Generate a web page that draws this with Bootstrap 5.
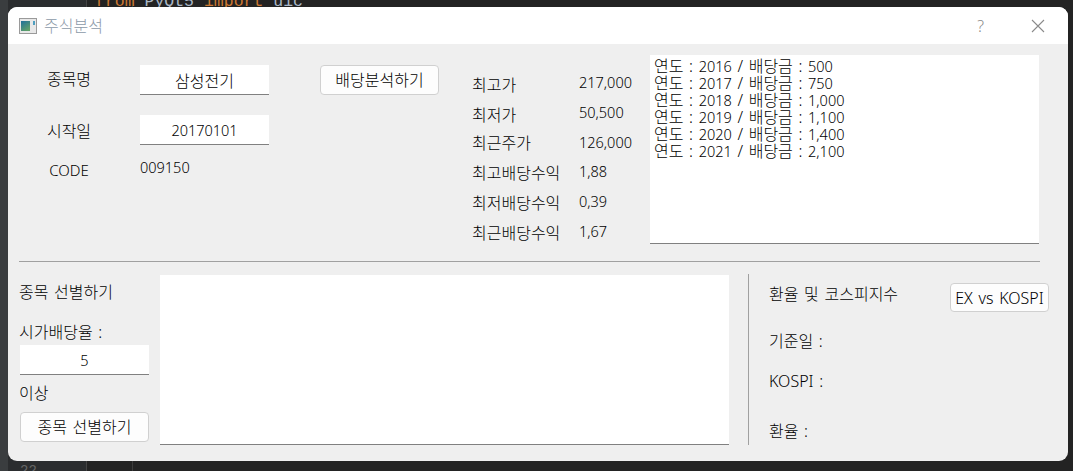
<!DOCTYPE html>
<html lang="ko">
<head>
    <meta charset="UTF-8">
    <title>주식분석</title>
    <link rel="stylesheet" href="https://cdn.jsdelivr.net/npm/bootstrap@5.3.0/dist/css/bootstrap.min.css">
    <style>
        html, body { height: 100%; overflow: hidden; }
        body {
            background: #232323;
            color: #000;
            font-family: "Noto Sans", "Noto Sans CJK KR", sans-serif;
            font-size: 16px;
            font-weight: 300;
            line-height: 20px;
            word-spacing: 1.5px;
        }
        .num { font-size: 14.5px; }
        .desk { height: 471px; padding: 7px 5px 10px 8px; position: relative; }
        .side-strip { position: absolute; left: 0; top: 0; bottom: 0; width: 87px; background: #2b2d2f; border-right: 1px solid #444; }
        .side-edge { position: absolute; left: 0; top: 0; bottom: 0; width: 8px; background: #3a3d3f; }
        .gutter-line { position: absolute; left: 132px; top: 0; bottom: 0; width: 1px; background: #3c3c3c; }
        .code-line { position: absolute; left: 95px; top: -8px; font: 16.5px/20px "Liberation Mono", monospace; color: #a9b7c6; white-space: pre; word-spacing: 0; }
        .code-line b { font-weight: 400; color: #cc7832; }
        .line-no { position: absolute; left: 20px; top: 463px; font: 14px/16px "Liberation Mono", monospace; color: #666; }
        .app-win { position: relative; height: 454px; background: #efefef; border-radius: 9px; overflow: hidden; }
        .title-bar { height: 37px; background: #fff; padding: 0 23px 0 11px; }
        .title-text { color: #8c9aa8; margin-left: 7px; }
        .help-mark { color: #8a8a8a; font-size: 16px; margin-right: 47px; }
        .top-part { height: 217px; padding-left: 11px; }
        .label-cell { width: 100px; margin-right: 21px; }
        .field-box {
            display: block;
            width: 129px; height: 30px;
            background: #fff;
            border: 0; border-bottom: 1px solid #808080; border-radius: 0;
            padding: 0; text-align: center;
            font-size: 16px; font-weight: 300; color: #000;
        }
        .field-box.num { font-size: 14.5px; }
        .field-row + .field-row { margin-top: 20px; }
        .push-box { margin-top: 21px; }
        .code-row { margin-top: 11px; height: 24px; }
        .code-name { margin-top: 4px; font-size: 15px; }
        .code-val { margin-top: -3px; }
        .label-low { padding-top: 2px; }
        .label-high { padding-bottom: 2px; }
        .qt-btn {
            background: #fdfdfd; color: #000;
            border: 1px solid #d0d0d0; border-radius: 4px;
            padding: 0; font-size: 16px; font-weight: 300; line-height: 20px; word-spacing: 1.5px;
        }
        .qt-btn:hover { background: #fdfdfd; border-color: #d0d0d0; color: #000; }
        .analyze-btn { width: 119px; height: 30px; margin: 21px 33px 0 51px; }
        .stats { width: 178px; padding-top: 24px; }
        .stat-row { height: 30px; line-height: 30px; }
        .stat-name { width: 107px; }
        .up-1 { margin-top: -1px; }
        .up-2 { margin-top: -2px; }
        .down-2 { margin-top: 2px; }
        .result-box {
            width: 389px; height: 189px; margin-top: 11px;
            background: #fff; border-bottom: 1px solid #808080;
            padding: 3px 4px; line-height: 17px; white-space: nowrap;
        }
        .split-line { width: 1021px; height: 1px; margin-left: 11px; background: #a0a0a0; }
        .bottom-part { padding-left: 12px; }
        .pick-col { width: 129px; }
        .pick-col .field-box { margin-top: 3px; }
        .pick-title { margin: 20px 0 0 -1px; }
        .pick-rate { margin: 20px 0 0 -1px; }
        .pick-more { margin: 8px 0 0 -1px; }
        .pick-btn { width: 129px; height: 30px; margin-top: 9px; }
        .pick-list { width: 569px; height: 170px; margin: 13px 0 0 11px; background: #fff; border-bottom: 1px solid #808080; }
        .v-line { width: 1px; height: 171px; margin: 12px 20px 0 19px; background: #a0a0a0; }
        .fx-col { width: 280px; }
        .fx-head { margin-top: 21px; height: 29px; }
        .fx-head span { margin-top: -7px; }
        .fx-btn { width: 99px; height: 29px; }
        .fx-date { margin-top: 19px; }
        .fx-kospi { margin-top: 20px; }
        .fx-rate { margin-top: 30px; }
    </style>
</head>
<body>

<div class="desk">
    <div class="side-strip"></div>
    <div class="side-edge"></div>
    <div class="gutter-line"></div>
    <div class="code-line"><b>from</b> PyQt5 <b>import</b> uic</div>
    <div class="line-no">22</div>

    <div class="app-win">
        <div class="title-bar d-flex align-items-center">
            <svg width="18" height="16" viewBox="0 0 18 16">
                <defs>
                    <linearGradient id="iconFill" x1="0" y1="0" x2="0.6" y2="1">
                        <stop offset="0" stop-color="#1f6f9c"/>
                        <stop offset="1" stop-color="#5fa06a"/>
                    </linearGradient>
                </defs>
                <rect x="0.5" y="0.5" width="17" height="15" fill="#e8e8e8" stroke="#9a9a9a"/>
                <rect x="2" y="3" width="9" height="10" fill="url(#iconFill)"/>
                <rect x="14" y="3" width="2" height="4" fill="#4f9fc0"/>
            </svg>
            <span class="title-text">주식분석</span>
            <span class="help-mark ms-auto">?</span>
            <svg width="14" height="14" viewBox="0 0 14 14">
                <path d="M1 1 L13 13 M13 1 L1 13" stroke="#8a8a8a" stroke-width="1.1" fill="none"/>
            </svg>
        </div>

        <div class="top-part d-flex">
            <div class="push-box">
                <div class="field-row d-flex align-items-center">
                    <div class="label-cell text-center label-high">종목명</div>
                    <input class="field-box" value="삼성전기" readonly>
                </div>
                <div class="field-row d-flex align-items-center">
                    <div class="label-cell text-center label-low">시작일</div>
                    <input class="field-box num" value="20170101" readonly>
                </div>
                <div class="code-row d-flex align-items-center">
                    <div class="label-cell text-center code-name">CODE</div>
                    <div class="code-val num">009150</div>
                </div>
            </div>
            <button class="btn qt-btn analyze-btn flex-shrink-0">배당분석하기</button>
            <div class="stats flex-shrink-0">
                <div class="stat-row d-flex"><div class="stat-name down-2">최고가</div><div class="num up-1">217,000</div></div>
                <div class="stat-row d-flex"><div class="stat-name down-2">최저가</div><div class="num up-1">50,500</div></div>
                <div class="stat-row d-flex"><div class="stat-name">최근주가</div><div class="num up-1">126,000</div></div>
                <div class="stat-row d-flex"><div class="stat-name">최고배당수익</div><div class="num up-2">1,88</div></div>
                <div class="stat-row d-flex"><div class="stat-name">최저배당수익</div><div class="num up-2">0,39</div></div>
                <div class="stat-row d-flex"><div class="stat-name">최근배당수익</div><div class="num up-2">1,67</div></div>
            </div>
            <div class="result-box flex-shrink-0" id="resultBox"></div>
        </div>

        <div class="split-line"></div>

        <div class="bottom-part d-flex">
            <div class="pick-col flex-shrink-0">
                <div class="pick-title">종목 선별하기</div>
                <div class="pick-rate">시가배당율 :</div>
                <input class="field-box num" value="5" readonly>
                <div class="pick-more">이상</div>
                <button class="btn qt-btn pick-btn">종목 선별하기</button>
            </div>
            <div class="pick-list flex-shrink-0"></div>
            <div class="v-line flex-shrink-0"></div>
            <div class="fx-col flex-shrink-0">
                <div class="fx-head d-flex justify-content-between align-items-center">
                    <span>환율 및 코스피지수</span>
                    <button class="btn qt-btn fx-btn">EX vs KOSPI</button>
                </div>
                <div class="fx-date">기준일 :</div>
                <div class="fx-kospi">KOSPI :</div>
                <div class="fx-rate">환율 :</div>
            </div>
        </div>
    </div>
</div>

<script src="https://cdn.jsdelivr.net/npm/bootstrap@5.3.0/dist/js/bootstrap.bundle.min.js"></script>
<script>
    const dividends = [["2016", "500"], ["2017", "750"], ["2018", "1,000"], ["2019", "1,100"], ["2020", "1,400"], ["2021", "2,100"]];
    document.getElementById("resultBox").innerHTML = dividends.map(d =>
        `<div>연도 : <span class="num">${d[0]}</span> / 배당금 : <span class="num">${d[1]}</span></div>`
    ).join("");
</script>
</body>
</html>
